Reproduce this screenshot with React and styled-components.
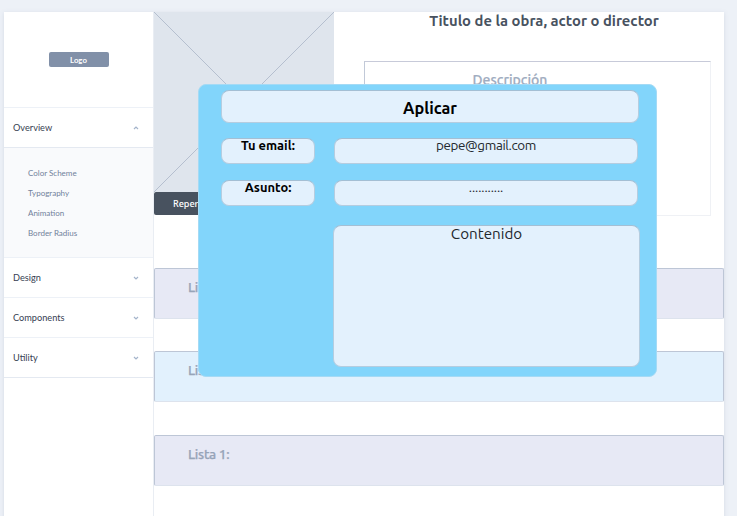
import React from "react";
import styled, { createGlobalStyle } from "styled-components";

const GlobalStyle = createGlobalStyle`
  * { box-sizing: border-box; }
  html, body { margin: 0; height: 516px; overflow: hidden; background: #edf1f7; }
  body { font-family: Ubuntu, "Noto Sans", sans-serif; }
`;

const Page = styled.div`
  position: relative;
  height: 516px;
  padding: 12px 13px 0 4px;
  overflow: hidden;
`;

const Sheet = styled.div`
  display: flex;
  height: 520px;
  background: #fff;
  box-shadow: 0 1px 4px rgba(143, 155, 179, 0.25);
`;

const Sidebar = styled.nav`
  width: 150px;
  flex: none;
  border-right: 1px solid #e9edf3;
  font-family: Lato, sans-serif;
`;

const Brand = styled.div`
  height: 96px;
  display: flex;
  justify-content: center;
  padding-top: 40px;
  border-bottom: 1px solid #edf1f7;
`;

const Logo = styled.div`
  width: 60px;
  height: 15px;
  border-radius: 2px;
  background: #8190a8;
  color: #fff;
  font-size: 7.8px;
  font-weight: 700;
  line-height: 16px;
  text-align: center;
`;

const MenuHeading = styled.div`
  height: 40px;
  display: flex;
  align-items: center;
  justify-content: space-between;
  padding: 0 14px 0 9px;
  border-bottom: 1px solid ${(p) => (p.$strong ? "#e4e9f1" : "#edf1f7")};
  color: #364152;
  font-size: 9.2px;
`;

const SubMenu = styled.div`
  height: 110px;
  padding: 15px 0 0 24px;
  background: #f9fafc;
  border-bottom: 1px solid #edf1f7;
`;

const SubItem = styled.div`
  height: 20px;
  color: #71819b;
  font-size: 8px;
  line-height: 20px;
`;

const Main = styled.main`
  flex: 1;
`;

const Hero = styled.section`
  display: flex;
  height: 256px;
`;

const Media = styled.div`
  width: 180px;
`;

const Placeholder = styled.svg`
  display: block;
  background: #dfe5ed;
`;

const PlayButton = styled.button`
  display: block;
  width: 100px;
  height: 23px;
  padding: 0 0 0 19px;
  border: 0;
  border-radius: 2px;
  background: #48525f;
  color: #fff;
  font: 500 9px "Noto Sans", sans-serif;
  text-align: left;
`;

const Details = styled.div`
  flex: 1;
  padding: 0 13px 0 30px;
`;

const Title = styled.h1`
  height: 49px;
  margin: 0;
  padding-left: 13px;
  color: #48525f;
  font-size: 14.8px;
  font-weight: 700;
  line-height: 18px;
  text-align: center;
  white-space: nowrap;
`;

const Description = styled.div`
  height: 155px;
  padding-top: 9px;
  padding-right: 55px;
  border: 1px solid #eff1f5;
  border-top-color: #c7cad9;
  border-left-color: #c1c9d8;
  color: #a0acc0;
  font-size: 14px;
  font-weight: 500;
  line-height: 19px;
  text-align: center;
  -webkit-text-stroke: 0.2px #a0acc0;
`;

const Lists = styled.section`
  display: grid;
  row-gap: 32.4px;
`;

const ListRow = styled.div`
  height: 51px;
  padding: 9px 0 0 33px;
  border: 1px solid #bdc6d6;
  border-bottom-color: #dde3ed;
  border-radius: 2px;
  background: ${(p) => (p.$blue ? "#e2f1fd" : "#e7e9f5")};
  color: #97a4b8;
  font-size: 13.6px;
  font-weight: 500;
  line-height: 19px;
  letter-spacing: -0.3px;
  -webkit-text-stroke: 0.25px #97a4b8;
`;

const Dialog = styled.form`
  position: absolute;
  top: 84px;
  left: 198px;
  width: 459px;
  height: 293px;
  padding: 6px 18px 0 23px;
  border: 1px solid #a4daf5;
  border-radius: 8px;
  background: #82d5fb;
`;

const Field = styled.div`
  border: 1px solid #b5cde0;
  border-top-color: #a4bfd4;
  border-radius: 8px;
  background: #e3f1fd;
  color: #22282d;
  text-align: center;
`;

const DialogTitle = styled(Field)`
  width: 418px;
  height: 33px;
  margin: -1px 0 15px -1px;
  color: #000;
  font-size: 16.3px;
  font-weight: 700;
  line-height: 34px;
`;

const FormGrid = styled.div`
  display: grid;
  grid-template-columns: 94px 304px;
  grid-template-rows: 26px 26px 142px;
  column-gap: 19px;
  row-gap: 16px;
  margin-left: -1px;
`;

const FieldLabel = styled(Field)`
  color: #000;
  font-size: 12.9px;
  font-weight: 700;
  line-height: 13px;
`;

const FieldValue = styled(Field)`
  font-size: 13.4px;
  line-height: 13px;
  letter-spacing: -0.35px;
`;

const SubjectValue = styled(Field)`
  font-size: 13px;
  line-height: 13px;
  letter-spacing: -0.08px;
`;

const MessageBox = styled(Field)`
  grid-column: 2;
  width: 307px;
  margin: 3px 0 -3px -1px;
  font-size: 15.2px;
  line-height: 15px;
`;

function Chevron({ up }) {
  return (
    <svg width="6" height="6" viewBox="0 0 6 6" fill="none" stroke="#a4b4cb" strokeWidth="1.2">
      <path d={up ? "M1 4L3 2L5 4" : "M1 2L3 4L5 2"} />
    </svg>
  );
}

export default function App() {
  return (
    <>
      <GlobalStyle />
      <Page>
        <Sheet>
          <Sidebar>
            <Brand><Logo>Logo</Logo></Brand>
            <MenuHeading $strong>Overview<Chevron up /></MenuHeading>
            <SubMenu>
              {["Color Scheme", "Typography", "Animation", "Border Radius"].map((item) => (
                <SubItem key={item}>{item}</SubItem>
              ))}
            </SubMenu>
            <MenuHeading>Design<Chevron /></MenuHeading>
            <MenuHeading>Components<Chevron /></MenuHeading>
            <MenuHeading $strong>Utility<Chevron /></MenuHeading>
          </Sidebar>
          <Main>
            <Hero>
              <Media>
                <Placeholder width="180" height="180" stroke="#b5bfcf" strokeWidth="1">
                  <path d="M0 0L180 180M180 0L0 180" />
                </Placeholder>
                <PlayButton>Repertorio</PlayButton>
              </Media>
              <Details>
                <Title>Titulo de la obra, actor o director</Title>
                <Description>Descripción</Description>
              </Details>
            </Hero>
            <Lists>
              <ListRow>Lista 1:</ListRow>
              <ListRow $blue>Lista 1:</ListRow>
              <ListRow>Lista 1:</ListRow>
            </Lists>
          </Main>
        </Sheet>
        <Dialog>
          <DialogTitle>Aplicar</DialogTitle>
          <FormGrid>
            <FieldLabel>Tu email:</FieldLabel>
            <FieldValue>pepe@gmail.com</FieldValue>
            <FieldLabel>Asunto:</FieldLabel>
            <SubjectValue>...........</SubjectValue>
            <MessageBox>Contenido</MessageBox>
          </FormGrid>
        </Dialog>
      </Page>
    </>
  );
}
